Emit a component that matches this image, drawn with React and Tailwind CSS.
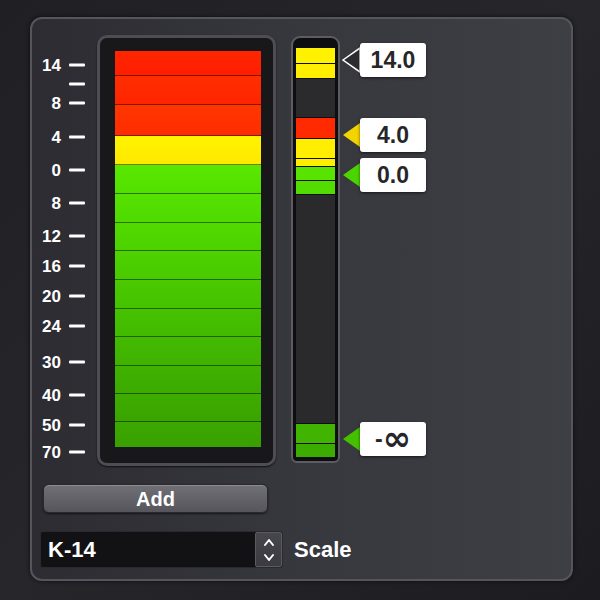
import React from "react";

const scale = [
  { t: "14", y: 30 },
  { t: "", y: 49 },
  { t: "8", y: 68 },
  { t: "4", y: 102 },
  { t: "0", y: 135 },
  { t: "8", y: 168 },
  { t: "12", y: 201 },
  { t: "16", y: 231 },
  { t: "20", y: 261 },
  { t: "24", y: 291 },
  { t: "30", y: 327 },
  { t: "40", y: 360 },
  { t: "50", y: 390 },
  { t: "70", y: 417 },
];

const bigSegs = [
  { h: 25, c: "bg-gradient-to-b from-[#ff2600] to-[#ff1e00]" },
  { h: 29, c: "bg-gradient-to-b from-[#ff2e00] to-[#ff2400]" },
  { h: 31, c: "bg-gradient-to-b from-[#ff3600] to-[#ff2c00]" },
  { h: 29, c: "bg-gradient-to-b from-[#fff400] to-[#ffe800]" },
  { h: 29, c: "bg-gradient-to-b from-[#5ae800] to-[#52e000]" },
  { h: 29, c: "bg-gradient-to-b from-[#56e200] to-[#4fda00]" },
  { h: 28, c: "bg-gradient-to-b from-[#52da00] to-[#4bd200]" },
  { h: 29, c: "bg-gradient-to-b from-[#4ed200] to-[#48ca00]" },
  { h: 29, c: "bg-gradient-to-b from-[#4aca00] to-[#45c200]" },
  { h: 28, c: "bg-gradient-to-b from-[#46c200] to-[#42ba00]" },
  { h: 29, c: "bg-gradient-to-b from-[#43ba00] to-[#3fb200]" },
  { h: 28, c: "bg-gradient-to-b from-[#40b200] to-[#3caa00]" },
  { h: 28, c: "bg-gradient-to-b from-[#3eac00] to-[#3aa400]" },
  { h: 25, c: "bg-gradient-to-b from-[#3ca800] to-[#38a000]" },
];

const smallSegs = [
  { h: 15, c: "bg-[#fff200]" },
  { h: 14, c: "bg-[#ffee00]" },
  { h: 38, c: "bg-[#2b2b2e]" },
  { h: 20, c: "bg-[#ff2a00]" },
  { h: 19, c: "bg-[#ffee00]" },
  { h: 7, c: "bg-[#ffee00]" },
  { h: 13, c: "bg-[#58e400]" },
  { h: 13, c: "bg-[#52dc00]" },
  { h: 228, c: "bg-[#2a2a2d]" },
  { h: 19, c: "bg-[#40b400]" },
  { h: 13, c: "bg-[#3cac00]" },
];

const markers = [
  { y: 25, text: "14.0", fill: "#2b2b30", stroke: "#ffffff" },
  { y: 100, text: "4.0", fill: "#f2d400", stroke: "none" },
  { y: 140, text: "0.0", fill: "#4cd400", stroke: "none" },
  { y: 404, text: "inf", fill: "#44c000", stroke: "none" },
];

function Marker({ m }) {
  return (
    <div
      className="absolute left-[2px] flex items-center -translate-y-1/2"
      style={{ top: m.y }}
    >
      <svg width="18" height="26" viewBox="0 0 18 26" className="block">
        <polygon
          points="1,13 18,1 18,25"
          fill={m.fill}
          stroke={m.stroke}
          strokeWidth={m.stroke === "none" ? 0 : 1.5}
        />
      </svg>
      <div className="w-[66px] h-[34px] bg-white rounded-[3px] shadow-[0_1px_3px_rgba(0,0,0,0.6)] flex items-center justify-center text-[#262628] font-bold text-[23px] leading-none">
        {m.text === "inf" ? (
          <span className="flex items-center">
            <span>-</span>
            <span className="text-[34px] font-['DejaVu_Sans',sans-serif] font-bold leading-none -mt-[3px]">∞</span>
          </span>
        ) : (
          m.text
        )}
      </div>
    </div>
  );
}

export default function App() {
  return (
    <div className="w-[600px] h-[600px] bg-gradient-to-br from-[#1f1f24] via-[#26262b] to-[#1c1c20] pt-[17px] pl-[30px] font-['Liberation_Sans',Arial,sans-serif] text-white">
      <div className="w-[543px] h-[564px] rounded-[12px] border-2 border-[#55555b] bg-gradient-to-r from-[#2c2c32] via-[#37373e] to-[#3e3e45] shadow-[0_0_4px_rgba(0,0,0,0.6)] flex flex-col pt-[16px]">
        {/* meters row */}
        <div className="flex items-start h-[431px]">
          {/* scale */}
          <div className="relative w-[65px] h-full">
            {scale.map((s, i) => (
              <div
                key={i}
                className="absolute left-0 w-[53px] flex items-center justify-end gap-[8px] -translate-y-1/2"
                style={{ top: s.y }}
              >
                <span className="text-[17px] font-bold leading-none">{s.t}</span>
                <span className="w-[16px] h-[3px] bg-white rounded-[1px]" />
              </div>
            ))}
          </div>

          {/* big meter */}
          <div className="w-[179px] h-[431px] rounded-[10px] border-[3px] border-[#4d4d53] bg-[#18181a] shadow-[0_1px_2px_rgba(0,0,0,0.7)] pt-[13px] pb-[16px] pl-[15px] pr-[12px]">
            <div className="flex flex-col h-[396px] w-[146px]">
              {bigSegs.map((s, i) => (
                <div
                  key={i}
                  className={`${s.c} ${i < bigSegs.length - 1 ? "border-b border-black/50" : ""}`}
                  style={{ height: s.h }}
                />
              ))}
            </div>
          </div>

          {/* small meter */}
          <div className="ml-[15px] mt-[1px] w-[49px] h-[427px] rounded-t-[9px] rounded-b-[6px] border-2 border-[#5c5c62] bg-[#0e0e10] pt-[10px] pb-[4px] px-[3px]">
            <div className="flex flex-col gap-[1px] w-[39px]">
              {smallSegs.map((s, i) => (
                <div key={i} className={s.c} style={{ height: s.h }} />
              ))}
            </div>
          </div>

          {/* markers */}
          <div className="relative h-full w-[100px]">
            {markers.map((m, i) => (
              <Marker key={i} m={m} />
            ))}
          </div>
        </div>

        {/* Add button */}
        <div className="mt-[18px] ml-[11px] w-[225px] h-[29px] rounded-[6px] bg-gradient-to-b from-[#707076] to-[#55555b] border border-[#2a2a2e] shadow-[inset_0_1px_0_rgba(255,255,255,0.2),0_1px_2px_rgba(0,0,0,0.6)] flex items-center justify-center text-[20px] font-bold leading-none">
          Add
        </div>

        {/* select row */}
        <div className="mt-[18px] ml-[8px] flex items-center">
          <div className="w-[243px] h-[37px] bg-[#121215] rounded-[3px] border border-[#2a2a2e] flex items-stretch">
            <div className="flex-1 flex items-center pl-[7px] text-[22px] font-bold leading-none">K-14</div>
            <div className="w-[27px] bg-gradient-to-b from-[#46464c] to-[#3a3a40] border border-[#5a5a60] rounded-[2px] flex items-center justify-center">
              <svg width="12" height="26" viewBox="0 0 12 26" fill="none" stroke="white" strokeWidth="2" strokeLinecap="round" strokeLinejoin="round">
                <polyline points="2,8 6,3 10,8" />
                <polyline points="2,18 6,23 10,18" />
              </svg>
            </div>
          </div>
          <span className="ml-[11px] text-[22px] font-bold leading-none">Scale</span>
        </div>
      </div>
    </div>
  );
}
